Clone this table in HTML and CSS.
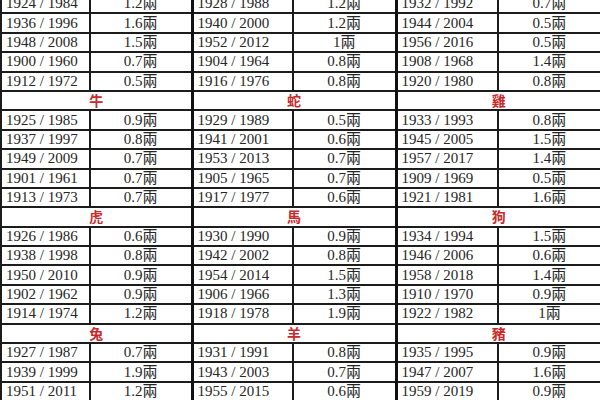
FILE: index.html
```html
<!DOCTYPE html>
<html lang="zh-Hant">
<head>
<meta charset="utf-8">
<title>稱骨表</title>
<link rel="stylesheet" href="styles.css">
</head>
<body>
<table class="chart">
  <colgroup>
    <col class="c1"><col class="c2"><col class="c3"><col class="c4"><col class="c5"><col class="c6">
  </colgroup>
  <tbody>
    <tr><td class="yr">1924 / 1984</td><td class="val">1.2兩</td><td class="yr grp">1928 / 1988</td><td class="val">1.2兩</td><td class="yr grp">1932 / 1992</td><td class="val">0.7兩</td></tr>
    <tr><td class="yr">1936 / 1996</td><td class="val">1.6兩</td><td class="yr grp">1940 / 2000</td><td class="val">1.2兩</td><td class="yr grp">1944 / 2004</td><td class="val">0.5兩</td></tr>
    <tr><td class="yr">1948 / 2008</td><td class="val">1.5兩</td><td class="yr grp">1952 / 2012</td><td class="val">1兩</td><td class="yr grp">1956 / 2016</td><td class="val">0.5兩</td></tr>
    <tr><td class="yr">1900 / 1960</td><td class="val">0.7兩</td><td class="yr grp">1904 / 1964</td><td class="val">0.8兩</td><td class="yr grp">1908 / 1968</td><td class="val">1.4兩</td></tr>
    <tr><td class="yr">1912 / 1972</td><td class="val">0.5兩</td><td class="yr grp">1916 / 1976</td><td class="val">0.8兩</td><td class="yr grp">1920 / 1980</td><td class="val">0.8兩</td></tr>
    <tr class="head"><td colspan="2">牛</td><td colspan="2" class="grp">蛇</td><td colspan="2" class="grp">雞</td></tr>
    <tr><td class="yr">1925 / 1985</td><td class="val">0.9兩</td><td class="yr grp">1929 / 1989</td><td class="val">0.5兩</td><td class="yr grp">1933 / 1993</td><td class="val">0.8兩</td></tr>
    <tr><td class="yr">1937 / 1997</td><td class="val">0.8兩</td><td class="yr grp">1941 / 2001</td><td class="val">0.6兩</td><td class="yr grp">1945 / 2005</td><td class="val">1.5兩</td></tr>
    <tr><td class="yr">1949 / 2009</td><td class="val">0.7兩</td><td class="yr grp">1953 / 2013</td><td class="val">0.7兩</td><td class="yr grp">1957 / 2017</td><td class="val">1.4兩</td></tr>
    <tr><td class="yr">1901 / 1961</td><td class="val">0.7兩</td><td class="yr grp">1905 / 1965</td><td class="val">0.7兩</td><td class="yr grp">1909 / 1969</td><td class="val">0.5兩</td></tr>
    <tr><td class="yr">1913 / 1973</td><td class="val">0.7兩</td><td class="yr grp">1917 / 1977</td><td class="val">0.6兩</td><td class="yr grp">1921 / 1981</td><td class="val">1.6兩</td></tr>
    <tr class="head"><td colspan="2">虎</td><td colspan="2" class="grp">馬</td><td colspan="2" class="grp">狗</td></tr>
    <tr><td class="yr">1926 / 1986</td><td class="val">0.6兩</td><td class="yr grp">1930 / 1990</td><td class="val">0.9兩</td><td class="yr grp">1934 / 1994</td><td class="val">1.5兩</td></tr>
    <tr><td class="yr">1938 / 1998</td><td class="val">0.8兩</td><td class="yr grp">1942 / 2002</td><td class="val">0.8兩</td><td class="yr grp">1946 / 2006</td><td class="val">0.6兩</td></tr>
    <tr><td class="yr">1950 / 2010</td><td class="val">0.9兩</td><td class="yr grp">1954 / 2014</td><td class="val">1.5兩</td><td class="yr grp">1958 / 2018</td><td class="val">1.4兩</td></tr>
    <tr><td class="yr">1902 / 1962</td><td class="val">0.9兩</td><td class="yr grp">1906 / 1966</td><td class="val">1.3兩</td><td class="yr grp">1910 / 1970</td><td class="val">0.9兩</td></tr>
    <tr><td class="yr">1914 / 1974</td><td class="val">1.2兩</td><td class="yr grp">1918 / 1978</td><td class="val">1.9兩</td><td class="yr grp">1922 / 1982</td><td class="val">1兩</td></tr>
    <tr class="head"><td colspan="2">兔</td><td colspan="2" class="grp">羊</td><td colspan="2" class="grp">豬</td></tr>
    <tr><td class="yr">1927 / 1987</td><td class="val">0.7兩</td><td class="yr grp">1931 / 1991</td><td class="val">0.8兩</td><td class="yr grp">1935 / 1995</td><td class="val">0.9兩</td></tr>
    <tr><td class="yr">1939 / 1999</td><td class="val">1.9兩</td><td class="yr grp">1943 / 2003</td><td class="val">0.7兩</td><td class="yr grp">1947 / 2007</td><td class="val">1.6兩</td></tr>
    <tr><td class="yr">1951 / 2011</td><td class="val">1.2兩</td><td class="yr grp">1955 / 2015</td><td class="val">0.6兩</td><td class="yr grp">1959 / 2019</td><td class="val">0.9兩</td></tr>
  </tbody>
</table>
</body>
</html>
```
FILE: styles.css
```css
html, body {
  margin: 0;
  padding: 0;
  background: #fff;
  overflow: hidden;
}

.chart {
  width: 600px;
  margin-top: -7px;
  table-layout: fixed;
  border-collapse: collapse;
  font-family: "Liberation Serif", "Noto Sans CJK TC", serif;
  font-size: 15px;
  color: #262626;
}

.c1 { width: 89px; }
.c2 { width: 102px; }
.c3 { width: 101px; }
.c4 { width: 103px; }
.c5 { width: 102px; }
.c6 { width: 103px; }

.chart tr {
  height: 19.4px;
}

.chart td {
  border: 2px solid #1c1c1c;
  padding: 0;
  line-height: 17px;
  white-space: nowrap;
  overflow: hidden;
}

.chart .yr {
  text-align: left;
  padding-left: 4px;
}

.chart .val {
  text-align: center;
}

.chart .grp {
  border-left: 3px solid #111;
}

.head td {
  text-align: center;
  color: #c62a2c;
  font-family: "Noto Sans CJK TC", sans-serif;
  font-weight: 700;
  font-size: 14px;
}
```
